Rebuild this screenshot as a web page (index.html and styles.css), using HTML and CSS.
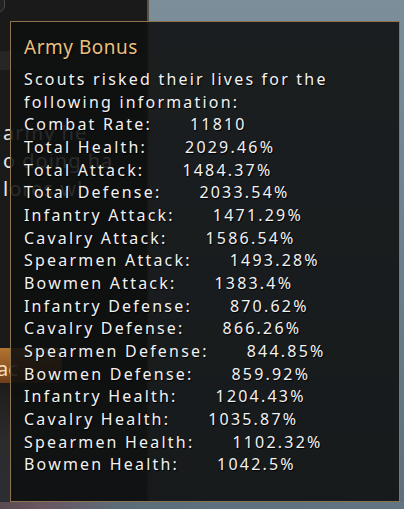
FILE: index.html
```html
<!DOCTYPE html>
<html>
<head>
<meta charset="utf-8">
<link rel="stylesheet" href="styles.css">
</head>
<body>
<div class="scene">
  <div class="side">
    <div class="side-cap"></div>
    <div class="side-band"></div>
    <div class="ghost-list">
      <div class="ghost">army he</div>
      <div class="ghost">o doing ha</div>
      <div class="ghost">lores wh</div>
    </div>
    <div class="side-btn">ac</div>
    <div class="side-low"></div>
  </div>
  <div class="world"></div>
</div>
<div class="tooltip">
  <div class="title">Army Bonus</div>
  <div class="intro">Scouts risked their lives for the following information:</div>
  <div class="row"><span>Combat Rate:</span><span class="val">11810</span></div>
  <div class="row"><span>Total Health:</span><span class="val">2029.46%</span></div>
  <div class="row"><span>Total Attack:</span><span class="val">1484.37%</span></div>
  <div class="row"><span>Total Defense:</span><span class="val">2033.54%</span></div>
  <div class="row"><span>Infantry Attack:</span><span class="val">1471.29%</span></div>
  <div class="row"><span>Cavalry Attack:</span><span class="val">1586.54%</span></div>
  <div class="row"><span>Spearmen Attack:</span><span class="val">1493.28%</span></div>
  <div class="row"><span>Bowmen Attack:</span><span class="val">1383.4%</span></div>
  <div class="row"><span>Infantry Defense:</span><span class="val">870.62%</span></div>
  <div class="row"><span>Cavalry Defense:</span><span class="val">866.26%</span></div>
  <div class="row"><span>Spearmen Defense:</span><span class="val">844.85%</span></div>
  <div class="row"><span>Bowmen Defense:</span><span class="val">859.92%</span></div>
  <div class="row"><span>Infantry Health:</span><span class="val">1204.43%</span></div>
  <div class="row"><span>Cavalry Health:</span><span class="val">1035.87%</span></div>
  <div class="row"><span>Spearmen Health:</span><span class="val">1102.32%</span></div>
  <div class="row"><span>Bowmen Health:</span><span class="val">1042.5%</span></div>
</div>
</body>
</html>
```
FILE: styles.css
```css
html, body {
  margin: 0;
  padding: 0;
}
body {
  width: 404px;
  height: 509px;
  overflow: hidden;
  position: relative;
  background: linear-gradient(90deg, #5a4a52 0%, #6a5560 10%, #5c6d7a 30%, #627583 100%);
  font-family: "Noto Sans", "Open Sans", sans-serif;
}
.scene {
  display: flex;
  height: 502px;
}
.side {
  width: 147px;
  background: #1a1a1a;
  border-right: 2px solid #5b5244;
  display: flex;
  flex-direction: column;
  overflow: hidden;
}
.side-cap {
  width: 22px;
  height: 14px;
  margin-left: -19px;
  margin-top: -4px;
  border: 1px solid #4a4a4a;
  border-radius: 6px;
  background: #222;
}
.side-band {
  height: 19px;
  margin-top: 39px;
  background: #262626;
}
.ghost-list {
  margin-top: 49px;
  padding-left: 3px;
}
.ghost {
  font-size: 20px;
  line-height: 28px;
  color: #e8e8e8;
  letter-spacing: 1px;
  white-space: nowrap;
}
.side-btn {
  margin-top: 145px;
  height: 35px;
  margin-right: 85px;
  background: linear-gradient(180deg, #b3742f 0%, #8e5424 60%, #6e3e19 100%);
  color: #f3dfbf;
  font-size: 20px;
  line-height: 35px;
  text-indent: -3px;
  padding-top: 3px;
  box-sizing: border-box;
  overflow: hidden;
}
.side-low {
  flex: 1;
  background: linear-gradient(180deg, #1c1c1c 0%, #2c2c2e 50%, #2a2d33 100%);
}
.world {
  flex: 1;
  background:
    radial-gradient(ellipse 70px 40px at 404px 0px, #2c333b 0%, rgba(44,51,59,0) 100%),
    linear-gradient(180deg, #7b8e9a 0%, #708390 40%, #5e6f7b 100%);
}
.tooltip {
  position: absolute;
  left: 10px;
  top: 21px;
  width: 390px;
  height: 481px;
  box-sizing: border-box;
  border: 1px solid #8d744e;
  background: rgba(14, 15, 15, 0.88);
  padding: 13px 12px 0 13px;
  color: #f2f2f2;
  text-shadow: 1px 1px 1px #000;
}
.title {
  font-size: 19px;
  line-height: 24px;
  color: #e8c07e;
  letter-spacing: 0.5px;
}
.intro {
  margin-top: 9px;
  width: 340px;
  font-size: 16px;
  line-height: 22.65px;
  letter-spacing: 2.2px;
}
.row {
  font-size: 16px;
  line-height: 22.65px;
  letter-spacing: 2.2px;
  white-space: nowrap;
}
.val {
  margin-left: 38px;
}
```
